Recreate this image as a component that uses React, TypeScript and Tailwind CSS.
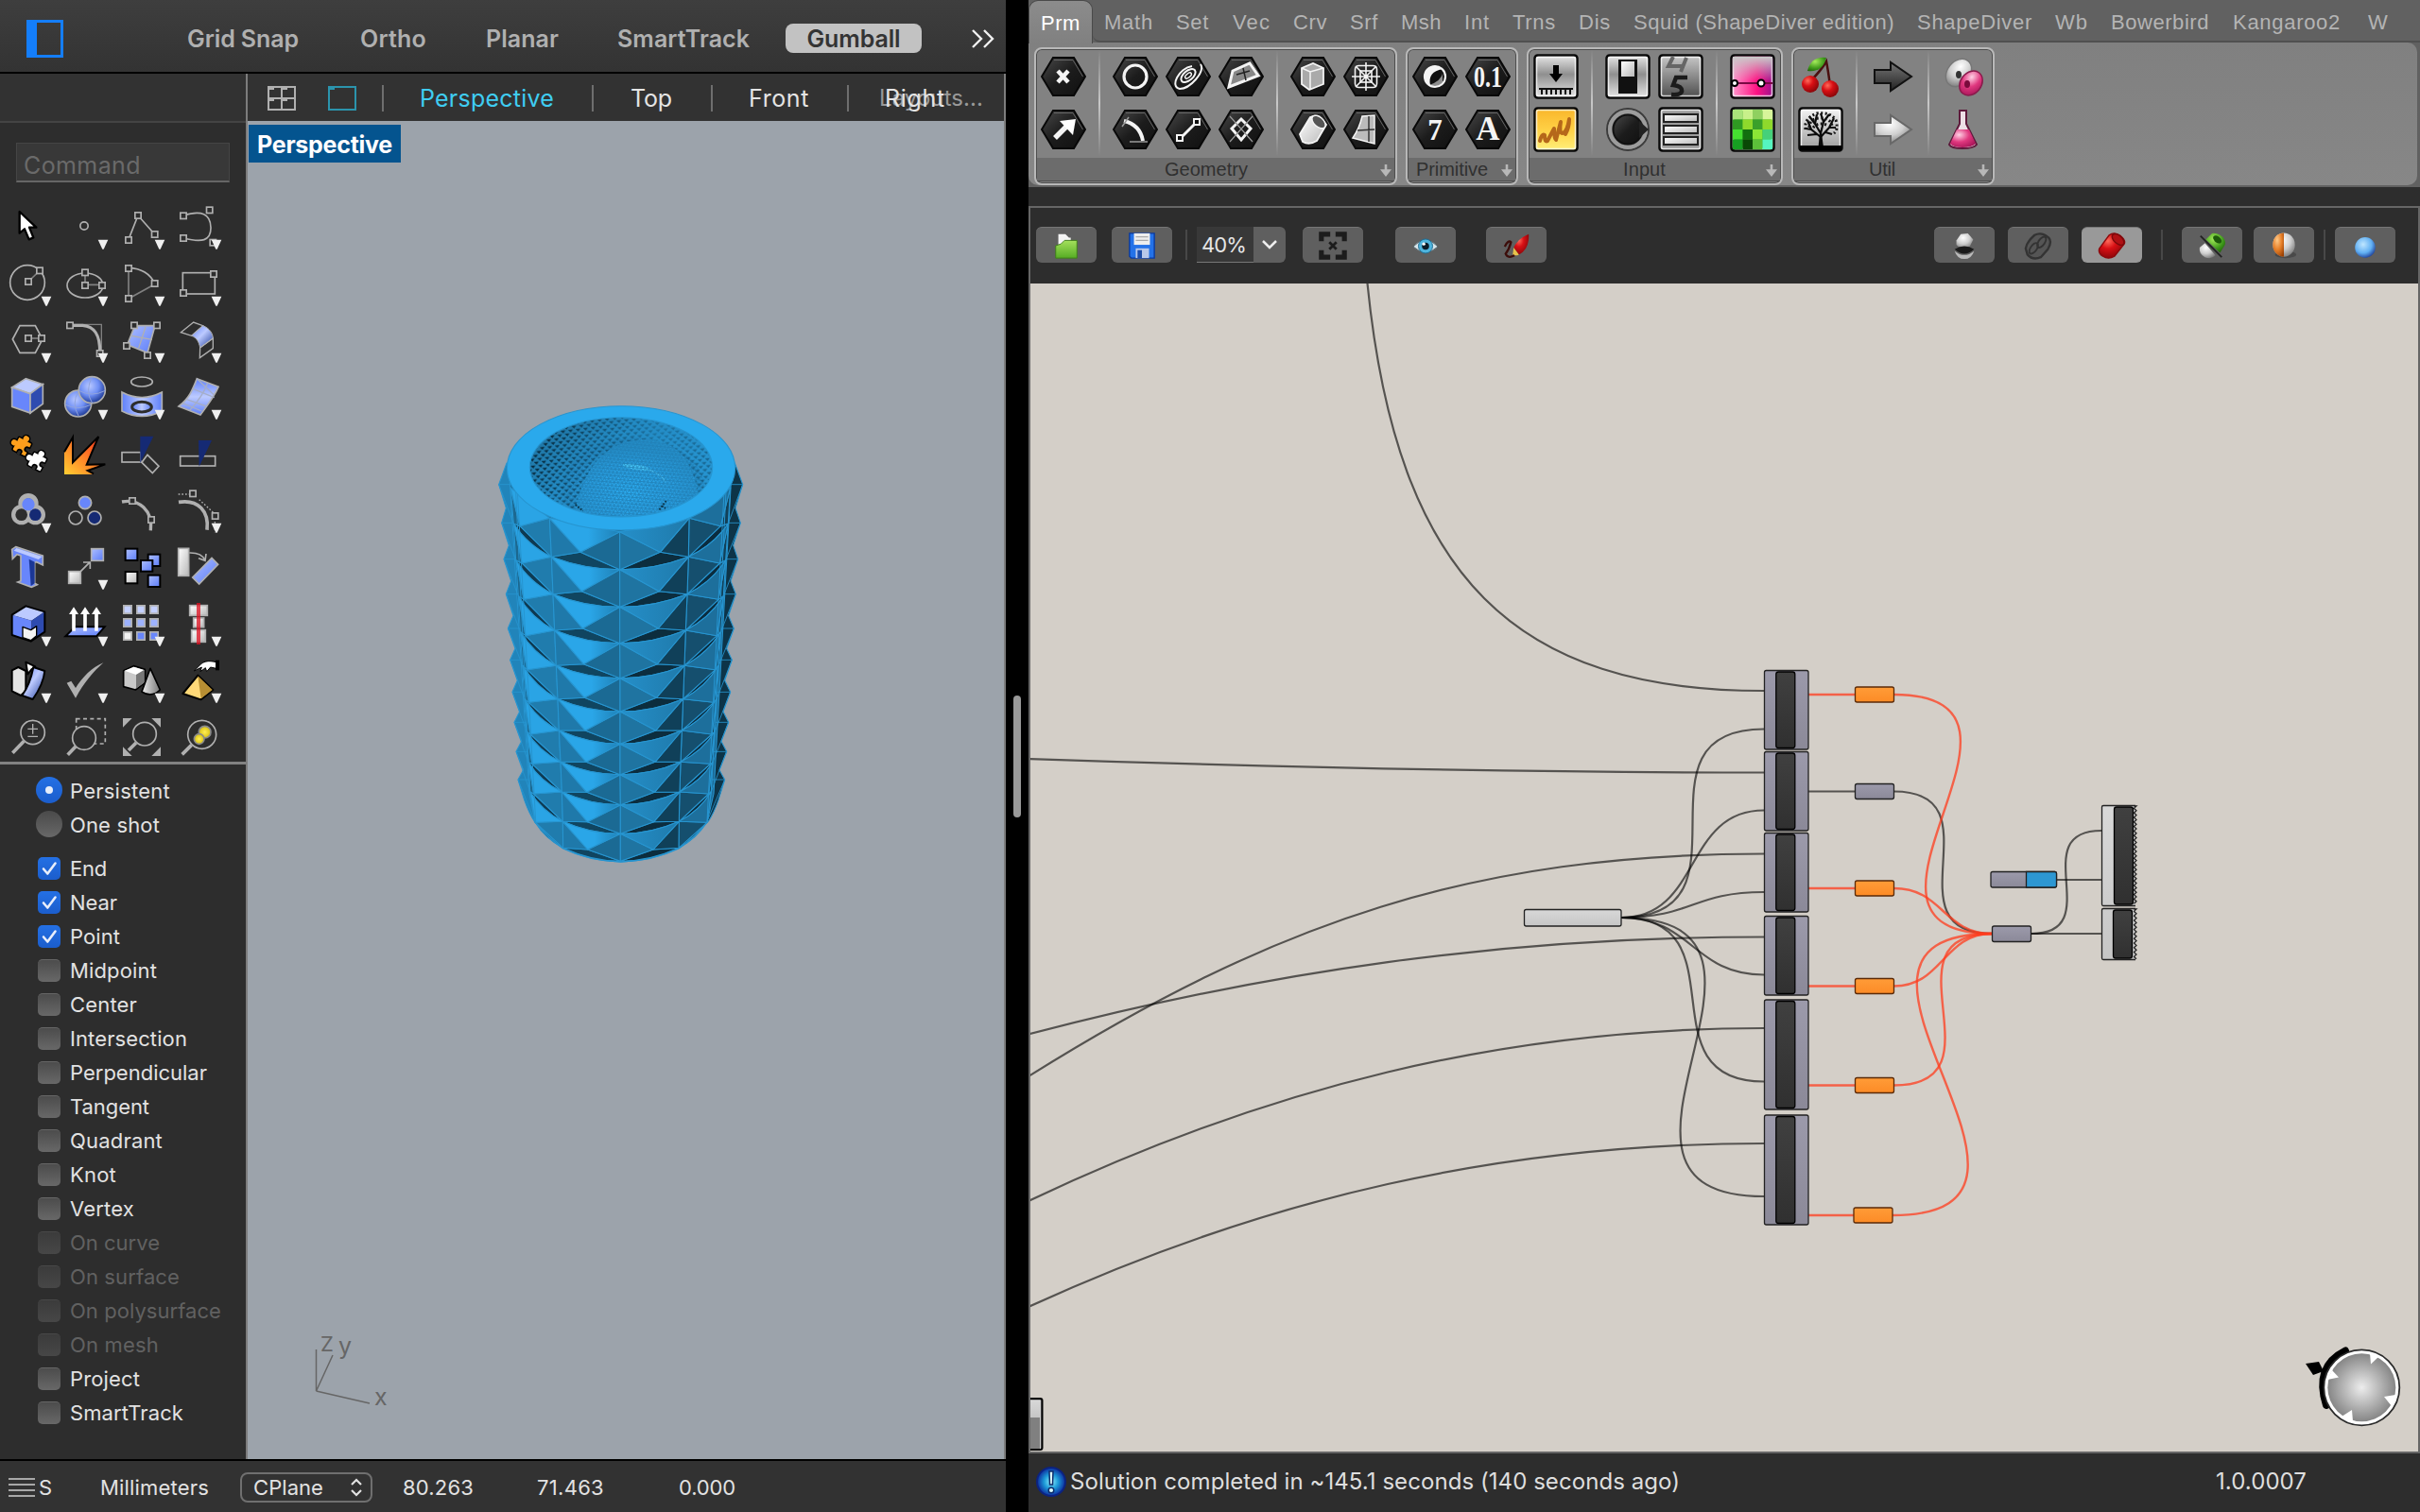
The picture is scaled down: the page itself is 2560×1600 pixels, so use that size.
import { useLayoutEffect, useRef, useState } from 'react'
import type { ReactNode } from 'react'

const INTER = "font-['Inter','Liberation_Sans',sans-serif]"
const ARIAL = "font-['Liberation_Sans',sans-serif]"

/* Single-line label whose tracking is tuned so that it spans `w` pixels. */
function Label({ w, children, className = '' }: { w: number; children: string; className?: string }) {
  const ref = useRef<HTMLSpanElement>(null)
  const [tracking, setTracking] = useState(0)
  useLayoutEffect(() => {
    if (!ref.current) return
    const natural = ref.current.getBoundingClientRect().width - tracking * children.length
    setTracking((w - natural) / children.length)
  }, [w, children])
  return (
    <span ref={ref} className={`inline-block shrink-0 whitespace-pre leading-none ${className}`} style={{ letterSpacing: `${tracking}px` }}>
      {children}
    </span>
  )
}

function Defs() {
  return (
    <svg className="absolute h-0 w-0">
      <defs>
        <linearGradient id="blue" x1="0" y1="0" x2="1" y2="1"><stop offset="0" stopColor="#aebfff" /><stop offset="1" stopColor="#5b7cf8" /></linearGradient>
        <linearGradient id="blueDeep" x1="0" y1="0" x2="1" y2="1"><stop offset="0" stopColor="#6484fb" /><stop offset=".45" stopColor="#bccaff" /><stop offset="1" stopColor="#1d3a98" /></linearGradient>
        <linearGradient id="blueBand" x1="0" y1="0" x2="0" y2="1"><stop offset="0" stopColor="#5f80fa" /><stop offset=".5" stopColor="#bccaff" /><stop offset="1" stopColor="#5f80fa" /></linearGradient>
        <linearGradient id="blueSide" x1="0" y1="0" x2="1" y2="0"><stop offset="0" stopColor="#5f80fa" /><stop offset=".5" stopColor="#bccaff" /><stop offset="1" stopColor="#5f80fa" /></linearGradient>
        <radialGradient id="ball" cx=".4" cy=".35" r=".7"><stop offset="0" stopColor="#b9c8ff" /><stop offset=".5" stopColor="#7090f5" /><stop offset="1" stopColor="#15308a" /></radialGradient>
        <linearGradient id="white" x1="0" y1="0" x2="1" y2="1"><stop offset="0" stopColor="#ffffff" /><stop offset="1" stopColor="#b8b8b8" /></linearGradient>
        <linearGradient id="cone" x1="0" y1="0" x2="1" y2="0"><stop offset="0" stopColor="#eee" /><stop offset="1" stopColor="#777" /></linearGradient>
        <linearGradient id="fire" x1="0" y1="1" x2="1" y2="0"><stop offset="0" stopColor="#ffcf33" /><stop offset="1" stopColor="#ff2a1a" /></linearGradient>
        <radialGradient id="yellow"><stop offset="0" stopColor="#ffee55" /><stop offset="1" stopColor="#d8c010" /></radialGradient>
        <linearGradient id="hex" x1="0" y1="0" x2="1" y2="1"><stop offset="0" stopColor="#4a4a4a" /><stop offset=".5" stopColor="#1c1c1c" /><stop offset="1" stopColor="#101010" /></linearGradient>
        <linearGradient id="plate" x1="0" y1="0" x2="0" y2="1"><stop offset="0" stopColor="#e8e8e8" /><stop offset=".45" stopColor="#8f8f8f" /><stop offset="1" stopColor="#e6e6e6" /></linearGradient>
        <linearGradient id="plateDark" x1="0" y1="0" x2="0" y2="1"><stop offset="0" stopColor="#c9c9c9" /><stop offset="1" stopColor="#4c4c4c" /></linearGradient>
        <linearGradient id="plateSoft" x1="0" y1="0" x2="0" y2="1"><stop offset="0" stopColor="#f4f4f4" /><stop offset="1" stopColor="#9a9a9a" /></linearGradient>
        <linearGradient id="gold" x1="0" y1="0" x2="0" y2="1"><stop offset="0" stopColor="#f9b52a" /><stop offset=".5" stopColor="#ffd045" /><stop offset="1" stopColor="#fff07a" /></linearGradient>
        <linearGradient id="pink" x1="0" y1="0" x2="1" y2="0"><stop offset="0" stopColor="#ff9ccf" /><stop offset=".6" stopColor="#ff1283" /><stop offset="1" stopColor="#95138f" /></linearGradient>
        <linearGradient id="shade" x1="0" y1="0" x2="0" y2="1"><stop offset="0" stopColor="#c9c9c9" /><stop offset="1" stopColor="#c9c9c9" stopOpacity="0" /></linearGradient>
        <radialGradient id="red" cx=".35" cy=".3" r=".8"><stop offset="0" stopColor="#ff6a5a" /><stop offset=".4" stopColor="#d80f14" /><stop offset="1" stopColor="#7a0508" /></radialGradient>
        <radialGradient id="rose" cx=".35" cy=".3" r=".8"><stop offset="0" stopColor="#ffd0e4" /><stop offset=".5" stopColor="#e0387f" /><stop offset="1" stopColor="#a51457" /></radialGradient>
        <radialGradient id="silver" cx=".4" cy=".3" r=".8"><stop offset="0" stopColor="#ffffff" /><stop offset=".5" stopColor="#cfcfcf" /><stop offset="1" stopColor="#6d6d6d" /></radialGradient>
        <radialGradient id="green" cx=".4" cy=".3" r=".8"><stop offset="0" stopColor="#a5ec5b" /><stop offset=".6" stopColor="#419b1c" /><stop offset="1" stopColor="#1c5a08" /></radialGradient>
        <radialGradient id="orange" cx=".4" cy=".3" r=".8"><stop offset="0" stopColor="#ffc987" /><stop offset=".5" stopColor="#e8812a" /><stop offset="1" stopColor="#9b4103" /></radialGradient>
        <radialGradient id="sky" cx=".4" cy=".35" r=".7"><stop offset="0" stopColor="#bfe6ff" /><stop offset=".6" stopColor="#62b0f3" /><stop offset="1" stopColor="#1c3e98" /></radialGradient>
        <radialGradient id="info"><stop offset="0" stopColor="#8ff0ff" /><stop offset=".5" stopColor="#1c9ad8" /><stop offset="1" stopColor="#0d2a9c" /></radialGradient>
        <linearGradient id="lime" x1="0" y1="0" x2="0" y2="1"><stop offset="0" stopColor="#a4e05c" /><stop offset="1" stopColor="#56ad24" /></linearGradient>
        <linearGradient id="arrowDark" x1="0" y1="0" x2="0" y2="1"><stop offset="0" stopColor="#777" /><stop offset="1" stopColor="#222" /></linearGradient>
      </defs>
    </svg>
  )
}

/* ---------- Modelling tool palette ---------- */

const G = '#b0b0b0'
const BG = '#2d2d2d'

function Handle({ x, y }: { x: number; y: number }) {
  return <rect x={x - 9.5} y={y - 9.5} width="19" height="19" fill={BG} stroke={G} strokeWidth="5" />
}

/* Jigsaw piece: a square with two knobs and two notches. */
function Piece({ x, y, fill }: { x: number; y: number; fill: string }) {
  const body = <><rect x="-22" y="-22" width="44" height="44" rx="3" /><circle cx="0" cy="-28" r="9.500" /><circle cx="-28" cy="0" r="9.500" /></>
  return (
    <g transform={`translate(${x} ${y}) rotate(28)`}>
      <g fill="#000" stroke="#000" strokeWidth="9">{body}</g>
      <g fill={fill} stroke="none">{body}</g>
      <circle cx="0" cy="18" r="7" fill={BG} stroke="#000" strokeWidth="5" />
      <circle cx="18" cy="0" r="7" fill={BG} stroke="#000" strokeWidth="5" />
      <path d="M-5 24H5M24 -5V5" stroke={BG} strokeWidth="7" />
    </g>
  )
}

/* Each drawing lives in its own 180-unit cell of the palette's drawing space. */
const TOOLS: ReactNode[][] = [
  [
    <path d="M62 72V140L78 127L92 160L106 154L93 122L115 122Z" fill="#fff" stroke="#000" strokeWidth="7" strokeLinejoin="round" />,
    <circle cx="267" cy="117" r="12.5" />,
    <><path d="M408 160L438 84L491 144" /><Handle x={408} y={162} /><Handle x={438} y={84} /><Handle x={491} y={144} /></>,
    <><path d="M582 84C640 66 668 80 669 122C670 166 640 170 582 156" /><Handle x={582} y={85} /><Handle x={665} y={67} /><Handle x={582} y={156} /><Handle x={676} y={170} /></>,
  ],
  [
    <><circle cx="87" cy="297" r="55" /><path d="M90 294L126 259" stroke="#808080" /><Handle x={90} y={294} /><Handle x={126} y={259} /></>,
    <><ellipse cx="270" cy="306" rx="57" ry="39" /><path d="M270 268V304H320" stroke="#808080" /><Handle x={270} y={265} /><Handle x={270} y={306} /><Handle x={324} y={306} /></>,
    <><path d="M408 252V348L491 302" stroke="#808080" /><path d="M408 250C450 252 478 272 491 300" /><Handle x={408} y={252} /><Handle x={408} y={348} /><Handle x={491} y={300} /></>,
    <><rect x="580" y="266" width="102" height="67" /><Handle x={678} y={270} /><Handle x={582} y={330} /></>,
  ],
  [
    <><path d="M40 477L63 434H112L135 477L112 520H63Z" /><path d="M90 474H130" stroke="#808080" /><Handle x={90} y={474} /><Handle x={132} y={474} /></>,
    <><path d="M222 430H322V520" stroke="#808080" strokeWidth="4" /><path d="M222 433H262C300 436 318 462 317 520" strokeWidth="10" /><Handle x={222} y={433} /><Handle x={317} y={522} /></>,
    <><path d="M428 434H492L468 520L404 494Z" fill="url(#blue)" /><path d="M462 438L440 505M418 466L482 478" strokeWidth="4" /><Handle x={426} y={433} /><Handle x={498} y={433} /><Handle x={402} y={498} /><Handle x={468} y={528} /></>,
    <><path d="M574 455L614 423L644 434L608 466Z" strokeWidth="4" /><path d="M644 434C665 442 675 458 676 474L635 504C632 486 624 472 608 466Z" fill="url(#blueDeep)" strokeWidth="3" /><path d="M676 474V506L634 536L635 504Z" strokeWidth="4" /></>,
  ],
  [
    <><path d="M38 630L82 602L136 620L96 650Z" fill="#bccaff" /><path d="M38 630L96 650V711L38 691Z" fill="#6886fb" /><path d="M96 650L136 620V682L96 711Z" fill="#2e4bb0" /></>,
    <><circle cx="248" cy="681" r="42" fill="url(#ball)" /><path d="M206 684Q248 705 290 684M250 640Q225 680 250 722" stroke="#91a4dd" strokeWidth="3" /><circle cx="292" cy="638" r="42" fill="url(#ball)" /><path d="M250 640Q292 662 334 640M293 596Q268 640 293 680" stroke="#91a4dd" strokeWidth="3" /></>,
    <><ellipse cx="450" cy="612" rx="34" ry="15" /><path d="M387 645Q450 678 514 645V705Q450 738 387 705Z" fill="url(#blueSide)" /><ellipse cx="450" cy="692" rx="31" ry="16" fill="url(#blueSide)" stroke={BG} strokeWidth="9" /></>,
    <><path d="M625 602L693 628C680 660 655 690 636 717L567 690C600 665 610 640 625 602Z" fill="url(#blueBand)" /><path d="M659 616C648 646 622 682 602 703M612 634L680 662M592 668L656 690M625 602L680 655M580 680L640 705" stroke="#a5aec9" strokeWidth="4" /></>,
  ],
  [
    <><Piece x={70} y={818} fill="#ff9f1c" /><Piece x={118} y={866} fill="#fff" /></>,
    <><path d="M204 906V835L231 788V868L313 786L275 875L334 874L278 894L297 906Z" fill="url(#fire)" stroke="none" /><path d="M204 835L231 788V868L313 786L275 875L334 874L278 894L297 904" stroke="#000" strokeWidth="6" /></>,
    <><rect x="387" y="836" width="60" height="31" /><path d="M450 868L468 844L504 880L484 902Z" /><path d="M445 785H487L445 870Z" fill="#152a74" stroke="none" /></>,
    <><rect x="572" y="848" width="111" height="31" /><path d="M630 798H672L632 881Z" fill="#152a74" stroke="none" /></>,
  ],
  [
    <><g strokeWidth="16" stroke={G}><circle cx="68" cy="134" r="24" /><circle cx="112" cy="134" r="24" /><circle cx="90" cy="98" r="24" /></g><g stroke="none"><circle cx="112" cy="134" r="19" fill="#152a74" /><circle cx="68" cy="134" r="19" fill={BG} /><circle cx="90" cy="101" r="20" fill="#6886fb" /></g></>,
    <><circle cx="270" cy="96" r="20" fill="#6886fb" /><circle cx="240" cy="144" r="21" /><circle cx="300" cy="144" r="21" fill="#152a74" /></>,
    <><path d="M387 93C440 82 486 120 478 184" strokeWidth="10" /><Handle x={420} y={90} /><Handle x={480} y={150} /></>,
    <><path d="M567 94C630 84 664 124 657 182" strokeWidth="11" /><path d="M566 69H600M632 86L676 126M682 156V190" strokeWidth="4" strokeDasharray="5 6" /><Handle x={612} y={67} /><Handle x={683} y={138} /></>,
  ],
  [
    <><path d="M50 236L136 264V294L116 284L110 286V352L118 356L100 364L56 348L66 344V264L54 260L40 274L38 244Z" fill="#6886fb" /><path d="M92 275L110 284V352L98 360Z" fill="#1b3796" stroke="none" /><path d="M52 240L134 267L122 276L44 248Z" fill="#bccaff" stroke="none" /></>,
    <><rect x="218" y="314" width="38" height="38" fill="url(#white)" /><rect x="290" y="242" width="38" height="38" fill="url(#blue)" /><path d="M256 314L286 284M264 285H286V306" /></>,
    <g stroke="#000" strokeWidth="6"><rect x="398" y="242" width="38" height="37" fill="url(#blue)" /><rect x="470" y="260" width="38" height="37" fill="url(#blue)" /><rect x="447" y="279" width="37" height="35" fill="url(#blue)" /><rect x="398" y="315" width="38" height="37" fill="url(#white)" /><rect x="470" y="326" width="38" height="37" fill="url(#blue)" /></g>,
    <><rect x="566" y="241" width="33" height="87" fill="url(#white)" /><path d="M601 255Q640 254 650 278M630 272L651 280L654 258" /><path d="M611 333L672 271L692 292L632 354Z" fill="url(#blue)" /></>,
  ],
  [
    <g stroke="#000" strokeLinejoin="round"><path d="M38 452L82 424L142 442L100 470Z" fill="#bccaff" stroke="none" /><path d="M38 452L100 470V536L38 516Z" fill="#6886fb" stroke="none" /><path d="M100 470L142 442V506L100 536Z" fill="#2e4bb0" stroke="none" /><path d="M38 452L82 424L142 442V506L98 536L38 516Z" strokeWidth="6" /><path d="M72 490L98 500L116 488V518L98 533L72 524Z" fill="#f3f3f3" strokeWidth="4" /></g>,
    <><path d="M238 490H332L306 520H208Z" fill="url(#blue)" stroke="#000" strokeWidth="6" /><path d="M234 503V446M270 503V446M306 503V446" stroke="#fff" strokeWidth="11" /><path d="M219 450L234 427L249 450ZM255 450L270 427L285 450ZM291 450L306 427L321 450Z" fill="#fff" stroke="none" /></>,
    <g strokeWidth="5">{[0, 1, 2].map((r) => [0, 1, 2].map((c) => <rect key={`${r}${c}`} x={392.5 + c * 42} y={422.5 + r * 42} width="25" height="25" fill={r === 2 && c === 0 ? '#f2f2f2' : ['#c4d0ff', '#9db2ff', '#6886fb'][r]} />))}</g>,
    <><rect x="602" y="422" width="56" height="32" fill="url(#white)" /><rect x="614" y="462" width="33" height="29" fill="url(#white)" /><rect x="608" y="500" width="44" height="38" fill="url(#white)" /><path d="M630 414V546" stroke="#e01020" strokeOpacity=".75" strokeWidth="12" /></>,
  ],
  [
    <g stroke="#000" strokeWidth="6" strokeLinejoin="round"><path d="M38 628L58 618L82 630V694L66 708L38 694Z" fill="#e4e4e4" /><path d="M82 602L112 616L100 625L88 640Z" fill="#fff" /><path d="M106 618L142 630C138 670 118 700 104 720L70 708C90 680 100 650 106 618Z" fill="url(#blueDeep)" /></g>,
    <path d="M212 668L226 662L240 684C262 650 290 620 328 604C296 632 266 668 240 716Z" fill={G} stroke="none" />,
    <g strokeLinejoin="round"><path d="M392 629L424 614L460 625V668L430 690L392 680Z" fill="#c9c9c9" stroke="#000" strokeWidth="5" /><path d="M395 629L425 617L457 627L432 642Z" fill="#fff" stroke="none" /><path d="M432 642L457 627V667L432 686Z" fill="#777" stroke="none" /><path d="M477 622L508 690Q480 716 450 696Z" fill="url(#cone)" stroke="#000" strokeWidth="5" /></g>,
    <g strokeLinejoin="round"><path d="M628 644L676 690L638 721L580 702Z" fill="#ffd978" stroke="#000" strokeWidth="6" /><path d="M628 646L674 690L638 718Z" fill="#b88f33" stroke="none" /><path d="M686 602C660 596 650 600 640 606L616 630L640 618L636 632L652 620L656 632L668 618L686 622Z" fill="#fff" stroke="#000" strokeWidth="3" /><path d="M684 596H696V628H684Z" fill="#000" stroke="none" /></g>,
  ],
  [
    <><circle cx="104" cy="825" r="38" /><path d="M76 853L40 890" strokeWidth="11" /><path d="M88 814H120M104 798V830M88 838H120" strokeWidth="4" /></>,
    <><path d="M242 782H334V861H242Z" strokeDasharray="12 10" /><circle cx="267" cy="843" r="37" fill={BG} /><path d="M240 870L215 896" strokeWidth="11" /></>,
    <><circle cx="459" cy="830" r="37" /><path d="M432 858L408 882" strokeWidth="11" /><path d="M390 780H419L390 809ZM510 780H481L510 809ZM390 900H419L390 871ZM510 900H481L510 871Z" fill={G} stroke="none" /></>,
    <><circle cx="641" cy="832" r="45" /><path d="M608 865L578 895" strokeWidth="11" /><circle cx="650" cy="824" r="19" fill="url(#yellow)" stroke="#8a8a8a" /><circle cx="632" cy="846" r="16" fill="url(#yellow)" stroke="#8a8a8a" /></>,
  ],
]

const NO_MENU = new Set(['0-0', '4-0', '4-1', '4-2', '4-3', '5-1', '5-2', '6-0', '6-2', '6-3', '9-0', '9-1', '9-2', '9-3'])

function ToolPalette() {
  return (
    <div className="grid grid-cols-4 auto-rows-[60px] w-[240px]">
      {TOOLS.map((row, r) =>
        row.map((icon, c) => {
          const top = 54 + 180 * (r % 5)
          return (
            <svg key={`${r}-${c}`} className="size-[60px] overflow-visible" viewBox={`${180 * c} ${top} 180 180`} fill="none" stroke={G} strokeWidth="5">
              {icon}
              {!NO_MENU.has(`${r}-${c}`) && <path transform={`translate(${180 * c} ${top})`} d="M131 107H163L149 137H145Z" fill="#f0f0f0" stroke="none" />}
            </svg>
          )
        }),
      )}
    </div>
  )
}

/* ---------- Object snaps ---------- */

type Snap = [string, number, 'on' | 'off' | 'disabled']
const SNAPS: Snap[] = [
  ['End', 39, 'on'], ['Near', 50, 'on'], ['Point', 53, 'on'], ['Midpoint', 92, 'off'], ['Center', 71, 'off'],
  ['Intersection', 124, 'off'], ['Perpendicular', 145, 'off'], ['Tangent', 84, 'off'], ['Quadrant', 98, 'off'],
  ['Knot', 49, 'off'], ['Vertex', 68, 'off'], ['On curve', 95, 'disabled'], ['On surface', 116, 'disabled'],
  ['On polysurface', 160, 'disabled'], ['On mesh', 94, 'disabled'], ['Project', 74, 'off'], ['SmartTrack', 120, 'off'],
]

function SnapList() {
  return (
    <div className={`${INTER} text-[22px] text-[#e2e2e2]`}>
      <div className="flex h-9 items-center pl-[38px]">
        <span className="mr-2 flex size-7 items-center justify-center rounded-full bg-gradient-to-b from-[#2470e4] to-[#1b5dcc]"><span className="size-2 rounded-full bg-[#e6edfa]" /></span>
        <Label w={106} className="mt-0.5">Persistent</Label>
      </div>
      <div className="flex h-9 items-center pl-[38px]">
        <span className="mr-2 size-7 rounded-full bg-gradient-to-b from-[#4a4a4a] to-[#686868]" />
        <Label w={95} className="mt-0.5">One shot</Label>
      </div>
      <div className="mt-[11px]">
        {SNAPS.map(([name, w, state]) => (
          <div key={name} className={state === 'disabled' ? 'flex h-9 items-center pl-10 text-[#616161]' : 'flex h-9 items-center pl-10'}>
            {state === 'on' ? (
              <span className="mr-2.5 flex size-6 items-center justify-center rounded-[5px] bg-gradient-to-b from-[#2470e4] to-[#1b5dcc]">
                <svg className="size-6" viewBox="0 0 24 24" fill="none" stroke="#e8eefb" strokeWidth="2.6" strokeLinecap="round" strokeLinejoin="round"><path d="M6 12.5L10.3 17.5L18.5 6.5" /></svg>
              </span>
            ) : (
              <span className={state === 'off' ? 'mr-2.5 size-6 rounded-[5px] border-t border-[#666] bg-gradient-to-b from-[#4c4c4c] to-[#686868]' : 'mr-2.5 size-6 rounded-[5px] border-t border-[#484848] bg-gradient-to-b from-[#3b3b3b] to-[#474747]'} />
            )}
            <Label w={w}>{name}</Label>
          </div>
        ))}
      </div>
    </div>
  )
}

/* ---------- Shaded vase in the viewport ---------- */

const AX = [437, 437, 437, 437, 438, 438, 438, 438, 439, 439, 439]
const AY = [458, 578, 697, 812, 923, 1029, 1132, 1229, 1325, 1417, 1504]
const BX = [214, 220, 225, 230, 235, 240, 244, 249, 253, 256, 257]
const BY = [415, 538, 656, 771, 883, 989, 1089, 1189, 1284, 1378, 1462]
const CX = [657, 655, 651, 646, 642, 638, 634, 630, 627, 625, 624]
const PX = [312, 316, 319, 322, 325, 327, 330, 332, 334, 335]
const RX = [565, 562, 559, 556, 553, 551, 549, 547, 545, 543]
const PY = [523, 647, 765, 878, 985, 1089, 1189, 1285, 1379, 1467]
const DX = [90, 100, 107, 115, 121, 128, 134, 141, 147, 152, 168]
const EX = [788, 781, 773, 766, 758, 751, 745, 739, 732, 727, 713]
const DY = [318, 432, 548, 662, 775, 882, 988, 1092, 1190, 1283, 1380]
const QX = [120, 127, 133, 138, 143, 148, 153, 159, 164, 169]
const SX = [757, 754, 750, 745, 740, 735, 729, 724, 719, 714]
const QY = [440, 558, 673, 788, 896, 1000, 1101, 1195, 1290, 1381]
const LX = [53, 62, 69, 76, 82, 89, 96, 102, 108, 114]
const ZX = [827, 820, 812, 805, 799, 793, 788, 782, 776, 770]
const SY = [308, 430, 545, 656, 765, 865, 967, 1063, 1156, 1245]

function silhouette(outer: number[], dir: number) {
  let d = `M${outer[0] + dir * 25} 240`
  outer.forEach((x, i) => {
    d += `L${x} ${SY[i]}`
    if (i < 9) d += `L${x + dir * 23} ${(SY[i] + SY[i + 1]) / 2 + 14}`
  })
  return `${d}L${outer[9] + dir * 20} 1310Q${outer[9] + dir * 34} 1350 ${outer[9] + dir * 52} 1378L440 1400V240Z`
}

function band(x0: number[], y0: number[], ax: number[], ay: number[], x1: number[], y1: number[], c: string[], key: string) {
  /* The outer bands are seen almost edge-on, so their rim arcs hug the lower end. */
  const side = key === 'l' || key === 'r'
  const arc = (k: number) => {
    if (!side) return `Q${(x0[k] + x1[k]) / 2} ${(y0[k] + y1[k]) / 2 + 21} ${x1[k]} ${y1[k]}`
    return `Q${x0[k] + (x1[k] - x0[k]) * 0.36} ${y0[k] + (y1[k] - y0[k]) * 0.64} ${x1[k]} ${y1[k]}`
  }
  return ay.map((_, k) => {
    const apex = `L${ax[k]} ${ay[k]}`
    const top = k === 0 ? `M${x0[0]} ${y0[0]}L${x1[0]} ${y1[0]}` : `M${x0[k]} ${y0[k]}${arc(k)}`
    return (
      <g key={key + k}>
        <path d={`M${x0[k + 1]} ${y0[k + 1]}${arc(k + 1)}${apex}Z`} fill={c[3]} />
        <path d={`M${x0[k]} ${y0[k]}${apex}L${x0[k + 1]} ${y0[k + 1]}Z`} fill={c[1]} />
        <path d={`M${x1[k]} ${y1[k]}${apex}L${x1[k + 1]} ${y1[k + 1]}Z`} fill={c[2]} />
        <path d={`${top}${apex}Z`} fill={c[0]} />
      </g>
    )
  })
}

function Vase() {
  return (
    <svg className="absolute left-[248px] top-[282px] h-[520px] w-[300px]" viewBox="0 0 900 1560" stroke="#2795d0" strokeWidth="3.2" strokeLinejoin="round">
      <defs>
        <linearGradient id="bowl" x1="0" y1="0.2" x2="1" y2="0.8"><stop offset="0" stopColor="#1f74a2" /><stop offset=".35" stopColor="#238bc4" /><stop offset="1" stopColor="#2796d3" /></linearGradient>
        <radialGradient id="bowlGlow" cx=".5" cy=".5" r=".5"><stop offset="0" stopColor="#2cb2f8" /><stop offset=".6" stopColor="#2aa5ea" stopOpacity=".7" /><stop offset="1" stopColor="#2aa5ea" stopOpacity="0" /></radialGradient>
        <linearGradient id="faceR" x1="0" y1="0" x2="1" y2="0"><stop offset="0" stopColor="#258fc9" /><stop offset="1" stopColor="#1f7aab" /></linearGradient>
        <linearGradient id="faceL" x1="0" y1="0" x2="1" y2="0"><stop offset="0" stopColor="#2aa6e8" /><stop offset=".55" stopColor="#2aa6e8" /><stop offset="1" stopColor="#1f80b5" /></linearGradient>
        <linearGradient id="fade" x1="0" y1="0.3" x2="1" y2="0.5"><stop offset="0" stopColor="#fff" /><stop offset=".3" stopColor="#8c8c8c" /><stop offset=".65" stopColor="#3c3c3c" /><stop offset="1" stopColor="#666" /></linearGradient>
        <mask id="shadeMask"><rect x="140" y="80" width="600" height="340" fill="url(#fade)" stroke="none" /></mask>
        <pattern id="mesh" width="24" height="22" patternUnits="userSpaceOnUse" patternTransform="rotate(-7)"><path d="M2 2H18L10 11ZM14 13H30L22 22ZM-10 13H6L-2 22Z" fill="#03202f" stroke="none" /></pattern>
        <pattern id="meshLit" width="25" height="21" patternUnits="userSpaceOnUse" patternTransform="rotate(5)"><path d="M0 1H25M0 11.5H25M0 1L12.5 21M12.5 1L25 21M12.5 1L0 21M25 1L12.5 21" stroke="#2080b7" strokeWidth="2.6" fill="none" /></pattern>
      </defs>
      <path d={silhouette(LX, 1)} fill="#2184ba" />
      <path d={silhouette(ZX, -1)} fill="#0d3448" />
      <path d="M88 300L150 1290L168 1380Q210 1430 257 1462Q340 1504 440 1506Q540 1504 624 1462Q680 1425 714 1380L735 1290L790 300Z" fill="#1c6a95" />
      {LX.map((x, i) => <path key={x} d={`M${x} ${SY[i]}L${DX[i]} ${SY[i]}M${x} ${SY[i]}L${DX[i + 1]} ${DY[i + 1]}`} fill="none" strokeWidth="2.5" />)}
      {ZX.map((x, i) => <path key={x} d={`M${x} ${SY[i]}L${EX[i]} ${SY[i]}M${x} ${SY[i]}L${EX[i + 1]} ${DY[i + 1]}`} fill="none" strokeWidth="2.5" />)}
      {band(DX, DY, QX, QY, BX, BY, ['#2aa4e5', '#1c6890', '#207cad', '#0e3a52'], 'l')}
      {band(EX, DY, SX, QY, CX, BY, ['#1d6f9c', '#124058', '#154f6e', '#0b2c3e'], 'r')}
      {band(BX, BY, PX, PY, AX, AY, ['url(#faceL)', '#1f79aa', '#1b6a94', '#104560'], 'cl')}
      {band(AX, AY, RX, PY, CX, BY, ['url(#faceR)', '#1f74a1', '#104059', '#0c2d3e'], 'cr')}
      <path d="M168 1380Q210 1430 257 1464Q340 1504 440 1506Q540 1504 624 1464Q680 1425 714 1380" fill="none" strokeWidth="4" />
      <path d="M107 330L152 1283M112 330L170 1378M774 330L727 1283M768 330L714 1378" fill="none" strokeWidth="3" />
      <ellipse cx="441" cy="256" rx="362" ry="197" fill="#2aa9ec" />
      <ellipse cx="441" cy="253" rx="290" ry="158" fill="url(#bowl)" />
      <clipPath id="bowlClip"><ellipse cx="441" cy="253" rx="288" ry="156" /></clipPath>
      <g clipPath="url(#bowlClip)" stroke="none">
        <ellipse cx="470" cy="330" rx="220" ry="140" fill="url(#bowlGlow)" />
        <path d="M445 244Q500 236 540 262Q500 268 455 254Z" fill="#4fd2ff" opacity=".8" />
        <path d="M530 262Q570 275 582 300" stroke="#4fc4f5" strokeWidth="4" fill="none" />
        <ellipse cx="480" cy="320" rx="225" ry="160" fill="url(#meshLit)" />
        <path d="M140 80H740V420H690Q690 170 520 165Q330 165 290 420H140Z" fill="url(#mesh)" mask="url(#shadeMask)" />
        <path d="M296 372L320 392M562 388L584 360M570 376L582 384" stroke="#0c3a52" strokeWidth="6" strokeDasharray="6 4" />
      </g>
    </svg>
  )
}

/* ---------- Modeller window ---------- */

function ModellerWindow() {
  return (
    <div className="flex h-[1600px] w-[1064px] shrink-0 flex-col bg-[#2d2d2d]">
      <div className={`${INTER} flex h-[78px] shrink-0 items-center border-b-2 border-black bg-gradient-to-b from-[#3e3e3e] to-[#333] pt-[5px] text-[25px] font-semibold text-[#b0b0b0]`}>
        <span className="ml-7 flex h-10 w-[39px] border-[3px] border-[#147efb]"><span className="w-2 bg-[#147efb]" /></span>
        <Label w={118} className="ml-[131px] mt-0.5">Grid Snap</Label>
        <Label w={70} className="ml-[65px] mt-0.5">Ortho</Label>
        <Label w={77} className="ml-[63px] mt-0.5">Planar</Label>
        <Label w={140} className="ml-[62px] mt-0.5">SmartTrack</Label>
        <div className="ml-[38px] flex h-[31px] w-36 items-center justify-center rounded-lg bg-[#c2c2c2] text-[#343434]"><Label w={99} className="mt-0.5">Gumball</Label></div>
        <svg className="ml-[52px] h-[22px] w-[26px]" viewBox="0 0 26 22" fill="none" stroke="#f0f0f0" strokeWidth="2.4"><path d="M2 2L11 11L2 20M14 2L23 11L14 20" /></svg>
      </div>
      <div className="flex h-[1466px] shrink-0">
        <div className="flex w-[260px] shrink-0 flex-col">
          <div className="h-[52px] shrink-0 border-b-2 border-[#444] bg-[#323232]" />
          <div className="mt-[21px] ml-[17px] flex h-[42px] w-[226px] shrink-0 items-center border border-b-2 border-[#454545] border-b-[#666] bg-[#383838] pl-[7px] pt-[7px]">
            <Label w={124} className={`${INTER} text-[25px] text-[#6a6a6a]`}>Command</Label>
          </div>
          <div className="mt-[25px]"><ToolPalette /></div>
          <div className="-mt-3 mb-[9px] h-[3px] shrink-0 bg-[#828282]" />
          <SnapList />
        </div>
        <div className="flex w-[804px] flex-col border-x-2 border-[#7d7d7d]">
          <div className={`${INTER} flex h-[50px] shrink-0 items-center bg-[#323232] pt-0.5 text-[25px] text-[#e4e4e4]`}>
            <svg className="ml-[21px] h-[26px] w-[30px] shrink-0" viewBox="0 0 30 26" fill="none" stroke="#b0b0b0" strokeWidth="2"><rect x="1" y="1" width="28" height="24" /><path d="M1 13H29M15 1V25M2 3H7M16 3H21M2 15H7M16 15H21" /></svg>
            <svg className="ml-[34px] h-[26px] w-[30px] shrink-0" viewBox="0 0 30 26" fill="none" stroke="#2b94ad" strokeWidth="2"><rect x="1" y="1" width="28" height="24" /><path d="M2 3H7" /></svg>
            <span className="ml-[27px] h-7 w-0.5 shrink-0 bg-[#6e6e6e]" />
            <Label w={142} className="ml-[38px] text-[#3fcdf2]">Perspective</Label>
            <span className="ml-[40px] h-7 w-0.5 shrink-0 bg-[#6e6e6e]" />
            <Label w={44} className="ml-[39px]">Top</Label>
            <span className="ml-[41px] h-7 w-0.5 shrink-0 bg-[#6e6e6e]" />
            <Label w={64} className="ml-[38px]">Front</Label>
            <span className="ml-[40px] h-7 w-0.5 shrink-0 bg-[#6e6e6e]" />
            <div className="relative ml-[32px] flex items-center">
              <Label w={110} className="text-[24px] text-[#999]">Layouts...</Label>
              <Label w={64} className="absolute left-[6px] top-0">Right</Label>
            </div>
          </div>
          <div className="relative h-[1416px] bg-[#9ca3ab]">
            <div className="absolute left-[1px] top-[4px] flex h-10 w-[161px] items-center bg-[#04548f] pl-[9px] pt-0.5">
              <Label w={143} className={`${INTER} text-[25px] font-bold text-white`}>Perspective</Label>
            </div>
            <Vase />
            <svg className={`${INTER} absolute left-[58px] top-[1272px] h-[100px] w-[110px]`} viewBox="320 1400 110 100" stroke="#666" strokeWidth="1.5" fontSize="25">
              <path d="M334.500 1428V1472L352 1434M334.500 1472L391 1485" fill="none" />
              <g fill="#666" stroke="none"><text x="339" y="1430" fontSize="22">Z</text><text x="358" y="1433">y</text><text x="396" y="1487">x</text></g>
            </svg>
          </div>
        </div>
      </div>
      <div className={`${INTER} flex h-14 items-center border-t-2 border-black bg-[#323232] pt-px text-[22px] text-[#e2e2e2]`}>
        <svg className="ml-[9px] h-5 w-7 shrink-0" viewBox="0 0 28 20" stroke="#a8a8a8" strokeWidth="2"><path d="M0 1H28M0 7H28M0 13H28M0 19H28" /></svg>
        <Label w={14} className="ml-[4px]">S</Label>
        <Label w={115} className="ml-[51px]">Millimeters</Label>
        <div className="ml-[33px] flex h-8 w-[140px] shrink-0 items-center rounded-lg border-2 border-[#6f6f6f] pl-3">
          <Label w={74}>CPlane</Label>
          <svg className="ml-[28px] h-5 w-3.5" viewBox="0 0 14 20" fill="none" stroke="#e2e2e2" strokeWidth="2.2"><path d="M2 7L7 2L12 7M2 13L7 18L12 13" /></svg>
        </div>
        <Label w={75} className="ml-[32px]">80.263</Label>
        <Label w={71} className="ml-[67px]">71.463</Label>
        <Label w={60} className="ml-[79px]">0.000</Label>
      </div>
    </div>
  )
}

/* ---------- Component ribbon ---------- */

function Hex({ children }: { children: ReactNode }) {
  return (
    <svg className="h-[42px] w-12" viewBox="0 0 48 42">
      <path d="M13 1H35L47 21L35 41H13L1 21Z" fill="url(#hex)" stroke="#080808" strokeWidth="2" />
      <path d="M14 3.500H34L44.500 21" fill="none" stroke="#666" strokeWidth="1" />
      <g fill="none" stroke="#f4f4f4" strokeWidth="2.6">{children}</g>
    </svg>
  )
}

function Plate({ fill = 'url(#plate)', children }: { fill?: string; children: ReactNode }) {
  return (
    <svg className="size-12" viewBox="0 0 48 48">
      <rect x="1.500" y="1.500" width="45" height="45" rx="3" fill={fill} stroke="#0a0a0a" strokeWidth="2.500" />
      <rect x="3.500" y="3.500" width="41" height="41" rx="2" fill="none" stroke="#fff" strokeOpacity=".75" strokeWidth="1.500" />
      {children}
    </svg>
  )
}

const serif = "font-['Liberation_Serif',serif] font-bold"
const GREENS = ['#a9e37a', '#c8f08a', '#8fd060', '#d7f59a', '#2f9a22', '#8fd92c', '#3aa02a', '#8fd92c', '#45e030', '#12700f', '#8be636', '#45d07a', '#17a022', '#0a4806', '#5cc03a', '#55f5c0']

const GEOMETRY: ReactNode[] = [
  <Hex><path d="M18 15L29 27M29 15L18 27" strokeWidth="4.500" /></Hex>,
  <Hex><path d="M15 30L28 17" strokeWidth="5.500" /><path d="M20 12L37 10L34 27Z" fill="#fff" stroke="none" /></Hex>,
  <Hex><circle cx="24" cy="21" r="12" strokeWidth="3.200" /></Hex>,
  <Hex><path d="M12 12Q29 16 32 33" strokeWidth="4" /><path d="M18 34H37M10 18L17 8" stroke="#999" strokeWidth="1.500" /></Hex>,
  <Hex><path d="M37 8C42 16 26 34 15 34C4 32 14 12 28 10" strokeWidth="2" /><ellipse cx="24" cy="20" rx="9" ry="5" transform="rotate(-40 24 20)" strokeWidth="2" /><ellipse cx="24" cy="20" rx="4" ry="2" transform="rotate(-40 24 20)" strokeWidth="1.500" /></Hex>,
  <Hex><path d="M16 30L33 13" strokeWidth="3" /><rect x="12" y="27" width="6" height="6" fill="#111" strokeWidth="2" /><rect x="30" y="10" width="6" height="6" fill="#111" strokeWidth="2" /></Hex>,
  <Hex><path d="M15 15L33 7L42 20L11 32Z" fill="#888" strokeWidth="3" /><path d="M19 19L33 15M26 12L29 25" stroke="#222" strokeWidth="1.500" /></Hex>,
  <Hex><path d="M24 10L34 20L24 32L14 20Z" strokeWidth="3" /><path d="M12 7L36 34M36 7L12 34" stroke="#999" strokeWidth="1.200" /></Hex>,
  <Hex><path d="M12 12L24 7L35 12V29L20 35L12 29Z" fill="#aaa" strokeWidth="1.800" /><path d="M12 12L21 16L35 12M21 16V34" strokeWidth="1.500" /></Hex>,
  <Hex><path d="M10 26L21 8Q30 3 38 16L28 33Q20 38 13 34Z" fill="url(#white)" strokeWidth="1.800" /><ellipse cx="30" cy="13" rx="8.500" ry="5" transform="rotate(42 30 13)" fill="#555" strokeWidth="1.500" /></Hex>,
  <Hex><g strokeWidth="1.600"><rect x="18" y="15" width="12" height="12" /><rect x="12.500" y="9.500" width="23" height="23" rx="4" /><path d="M24 6V36M9 21H39M13 10L35 32M35 10L13 32" /></g></Hex>,
  <Hex><path d="M20 7L33 6V36L10 30Q17 20 20 7Z" fill="#bbb" strokeWidth="1.500" /><path d="M15 22L33 21M27 7V34" stroke="#333" strokeWidth="1.500" /></Hex>,
]

const PRIMITIVE: ReactNode[] = [
  <Hex><circle cx="24" cy="21" r="11" strokeWidth="2.200" fill="#111" /><path d="M14 25A11 11 0 0 1 32 13Q16 16 19 30A11 11 0 0 1 14 25Z" fill="#f4f4f4" stroke="none" /><path d="M32 13Q34 24 18 30Q26 34 32 27" fill="#f4f4f4" stroke="none" opacity=".55" /></Hex>,
  <Hex><text x="24" y="32" textAnchor="middle" fill="#f4f4f4" stroke="none" fontSize="31" className={serif}>7</text></Hex>,
  <Hex><text x="9" y="31.500" fill="#f4f4f4" stroke="none" fontSize="31" className={serif} textLength="30" lengthAdjust="spacingAndGlyphs">0.1</text></Hex>,
  <Hex><text x="24" y="32" textAnchor="middle" fill="#f4f4f4" stroke="none" fontSize="35" className={serif}>A</text></Hex>,
]

const INPUT: ReactNode[] = [
  <Plate><path d="M21 12H27V21H31L24 30L17 21H21Z" fill="#000" /><path d="M6 36H42V38H6Z" fill="#111" /><path d="M9 38V43M14 38V43M19 38V43M24 38V43M29 38V43M34 38V43M39 38V43" stroke="#111" strokeWidth="2" /></Plate>,
  <Plate fill="url(#gold)"><path d="M7 36Q9 28 12 30Q12 38 15 36L22 23Q22 34 24 35L29 16Q27 28 31 28Q36 26 38 13Q38 22 34 29" fill="none" stroke="#b5671a" strokeWidth="4" strokeLinecap="round" strokeLinejoin="round" /></Plate>,
  <Plate><rect x="14" y="6" width="20" height="36" fill="#111" /><rect x="17" y="8" width="14" height="16" fill="url(#white)" /></Plate>,
  <svg className="size-12" viewBox="0 0 48 48"><circle cx="24" cy="24" r="22" fill="none" stroke="#3c3c3c" strokeWidth="2" /><circle cx="24" cy="24" r="19" fill="none" stroke="#9c9c9c" strokeWidth="4" /><circle cx="24" cy="24" r="15.500" fill="url(#hex)" stroke="#111" strokeWidth="2" /><path d="M36 15L46 24L36 33Z" fill="#222" /></svg>,
  <Plate fill="url(#plateDark)"><path d="M16 3L11 13H28M30 4L24 19" fill="none" stroke="#666" strokeWidth="4" /><path d="M31 25H19L16 33Q26 34 25 40Q23 44 14 43" fill="none" stroke="#1c1c1c" strokeWidth="4.500" /></Plate>,
  <Plate fill="#9c9c9c"><g fill="url(#white)" stroke="#222" strokeWidth="2"><rect x="6" y="8" width="36" height="8" /><rect x="6" y="20" width="36" height="8" /><rect x="6" y="32" width="36" height="8" /></g></Plate>,
  <Plate fill="url(#pink)"><rect x="3" y="3" width="42" height="26" fill="url(#shade)" /><path d="M3 31H45" stroke="#7a0a44" strokeWidth="2" /><circle cx="5" cy="31" r="3" fill="#fff" stroke="#000" strokeWidth="2" /><circle cx="33" cy="31" r="3.500" fill="#fff" stroke="#000" strokeWidth="2" /></Plate>,
  <Plate fill="#3fae2d">{GREENS.map((c, i) => <rect key={i} x={3 + (i % 4) * 10.5} y={3 + Math.floor(i / 4) * 10.5} width="10.500" height="10.500" fill={c} />)}</Plate>,
]

const UTIL: ReactNode[] = [
  <svg className="size-12" viewBox="0 0 48 48"><path d="M14 28Q24 18 30 8Q32 18 34 34" fill="none" stroke="#4a1010" strokeWidth="2.500" /><path d="M30 4Q14 2 10 18Q26 20 30 4Z" fill="url(#green)" /><circle cx="13" cy="32" r="9" fill="url(#red)" /><circle cx="34" cy="37" r="9" fill="url(#red)" /></svg>,
  <Plate fill="url(#plateSoft)"><path d="M24 43V28M24 32L14 24L8 23M14 24L10 14M24 28L18 18L12 10M18 18L20 8M24 28L27 16L24 7M27 16L33 8M24 32L33 22L40 22M33 22L38 12M29 27L36 29M20 29L10 30" stroke="#0a0a0a" strokeWidth="2.200" fill="none" /><path d="M21.500 43L23 28H25L27 43Z" fill="#0a0a0a" /><g fill="none" stroke="#151515" strokeWidth="3" strokeDasharray="2 2.500"><path d="M8 24Q6 12 20 7Q34 5 40 14Q43 24 38 28" /><path d="M12 22Q12 13 22 12Q34 11 36 20" /><path d="M16 22Q22 15 32 20" /></g><path d="M2 41H46V46H2Z" fill="#000" /></Plate>,
  <svg className="size-12" viewBox="0 0 48 48"><path d="M5 17H22V9L44 24L22 39V31H5Z" fill="url(#arrowDark)" stroke="#111" strokeWidth="2" /></svg>,
  <svg className="size-12" viewBox="0 0 48 48"><path d="M5 17H22V9L44 24L22 39V31H5Z" fill="url(#silver)" stroke="#686868" strokeWidth="2" /></svg>,
  <svg className="size-12" viewBox="0 0 48 48"><ellipse cx="18" cy="20" rx="12" ry="16" transform="rotate(38 18 20)" fill="url(#silver)" stroke="#777" strokeWidth="1.500" /><ellipse cx="18" cy="22" rx="3" ry="4" fill="#333" /><ellipse cx="31" cy="31" rx="11" ry="14" transform="rotate(38 31 31)" fill="url(#rose)" stroke="#8a1a4c" strokeWidth="1.500" /><ellipse cx="27" cy="32" rx="3" ry="4" fill="#7a0a3c" /></svg>,
  <svg className="size-12" viewBox="0 0 48 48"><path d="M19 4H26V18L37 40Q34 44 22 44Q10 44 8 40L19 18Z" fill="#eddfe6" stroke="#5e1a3c" strokeWidth="2" /><path d="M16 24H29L36 39Q32 43 22 43Q12 43 9 39Z" fill="url(#rose)" /></svg>,
]

function Column({ items }: { items: ReactNode[] }) {
  return (
    <div className="grid w-14 auto-rows-[56px] place-items-center">
      {items.map((it, i) => <div key={i} className="flex size-12 items-center justify-center">{it}</div>)}
    </div>
  )
}

function Rule() {
  return <div className="flex h-28 w-5 justify-center"><div className="w-0.5 bg-gradient-to-b from-transparent via-[#c8c8c8] to-transparent" /></div>
}

function Panel({ title, titleW, titlePad, width, icons, breaks }: { title: string; titleW: number; titlePad: string; width: string; icons: ReactNode[]; breaks: number[] }) {
  const columns: ReactNode[] = []
  for (let i = 0; i < icons.length; i += 2) {
    columns.push(<Column key={i} items={icons.slice(i, i + 2)} />)
    if (breaks.includes(i / 2)) columns.push(<Rule key={`r${i}`} />)
  }
  return (
    <div className={`${width} flex h-[146px] shrink-0 flex-col overflow-hidden rounded-lg border-2 border-[#b8b8b8] bg-[#828282] ring-1 ring-inset ring-[#4e4e4e]`}>
      <div className="flex h-[115px] shrink-0 pt-px pl-px">{columns}</div>
      <div className={`${ARIAL} ${titlePad} mx-px flex h-[25px] items-center justify-between border-b border-[#4e4e4e] bg-[#6c6c6c] pb-px pr-[3px] text-[20px] text-[#303030]`}>
        <Label w={titleW}>{title}</Label>
        <svg className="mt-1 h-[13px] w-3" viewBox="0 0 14 15" fill="#b8b8b8"><path d="M5.500 0H8.500V6H14L7 15L0 6H5.500Z" /></svg>
      </div>
    </div>
  )
}

const TABS: [string, number, string][] = [
  ['Math', 52, 'ml-[12px]'], ['Set', 35, 'ml-[24px]'], ['Vec', 40, 'ml-[25px]'], ['Crv', 36, 'ml-[24px]'], ['Srf', 30, 'ml-[24px]'],
  ['Msh', 43, 'ml-[24px]'], ['Int', 27, 'ml-[24px]'], ['Trns', 46, 'ml-[24px]'], ['Dis', 34, 'ml-[24px]'],
  ['Squid (ShapeDiver edition)', 276, 'ml-[24px]'], ['ShapeDiver', 122, 'ml-[24px]'], ['Wb', 35, 'ml-[24px]'],
  ['Bowerbird', 104, 'ml-[24px]'], ['Kangaroo2', 114, 'ml-[25px]'], ['W', 23, 'ml-[29px]'],
]

function Ribbon() {
  return (
    <div className="h-[198px] shrink-0 bg-[#616161]">
      <div className={`${ARIAL} flex h-[45px] text-[22px] text-[#b4b4b4]`}>
        <div className="h-[46px] w-[68px] shrink-0 rounded-t-[10px] border border-b-0 border-[#4a4a4a] bg-gradient-to-b from-[#8c8c8c] to-[#808080] pl-[12px] pt-[7px] text-white"><Label w={42}>Prm</Label></div>
        <div className="flex h-[45px] grow rounded-bl-lg border-b-2 border-[#505050] pt-[13px]">
          {TABS.map(([t, w, m]) => <Label key={t} w={w} className={m}>{t}</Label>)}
        </div>
      </div>
      <div className="mr-[3px] flex h-[151px] gap-[9px] rounded-r-[10px] rounded-bl-[10px] bg-gradient-to-b from-[#808080] to-[#878787] pl-[6px] pt-[5px]">
        <Panel title="Geometry" titleW={88} titlePad="pl-[135px]" width="w-[384px]" icons={GEOMETRY} breaks={[0, 3]} />
        <Panel title="Primitive" titleW={76} titlePad="pl-[8px]" width="w-[119px]" icons={PRIMITIVE} breaks={[]} />
        <Panel title="Input" titleW={45} titlePad="pl-[99px]" width="w-[271px]" icons={INPUT} breaks={[0, 2]} />
        <Panel title="Util" titleW={28} titlePad="pl-[79px]" width="w-[215px]" icons={UTIL} breaks={[0, 1]} />
      </div>
    </div>
  )
}

/* ---------- Canvas toolbar ---------- */

function Btn({ children, className = '', lit = false }: { children: ReactNode; className?: string; lit?: boolean }) {
  return (
    <div className={`${className} ${lit ? 'bg-[#999]' : 'bg-[#5f5f5f]'} flex h-[38px] w-16 shrink-0 items-center justify-center rounded-md border-t border-[#767676]`}>
      <svg className="size-[30px]" viewBox="0 0 32 32">{children}</svg>
    </div>
  )
}

function CanvasToolbar() {
  return (
    <div className="flex h-20 shrink-0 items-center bg-[#2d2d2d] pb-0.5 pl-[6px]">
      <Btn><path d="M7 3H15L19 7H21V20H7Z" fill="#f4f4f4" /><path d="M4 16L10 14L14 10H28V30H4Z" fill="url(#lime)" stroke="#3c7d17" /></Btn>
      <Btn className="ml-4"><path d="M2 2H30V30H4L2 28Z" fill="#2472e8" stroke="#0c3a9c" strokeWidth="1.500" /><rect x="7" y="2" width="18" height="13" fill="#eee" /><path d="M9 6H23M9 10H23" stroke="#aaa" strokeWidth="1.500" /><rect x="9" y="19" width="15" height="11" fill="#b8c8ea" /><rect x="11" y="21" width="5" height="9" fill="#1d4ca8" /></Btn>
      <span className="ml-[14px] h-8 w-0.5 bg-[#484848]" />
      <div className="ml-[10px] flex h-[38px] w-[60px] items-center border-b border-[#777] bg-[#383838] pl-[5px]"><Label w={47} className={`${INTER} text-[22px] text-[#e6e6e6]`}>40%</Label></div>
      <div className="flex h-[38px] w-[34px] items-center justify-center rounded-r-md bg-[#5f5f5f]"><svg className="h-2.5 w-4" viewBox="0 0 16 10" fill="none" stroke="#eee" strokeWidth="2.500"><path d="M1 1L8 8L15 1" /></svg></div>
      <Btn className="ml-[18px]"><path d="M3 11V3H13M19 3H29V11M29 21V29H19M13 29H3V21" fill="none" stroke="#1c1c1c" strokeWidth="5.500" /><path d="M12 12L20 20M20 12L12 20" stroke="#1c1c1c" strokeWidth="3" /></Btn>
      <Btn className="ml-[34px]"><path d="M2 17Q16 2 30 17Q16 30 2 17Z" fill="#d9e4e8" stroke="#4f6068" /><circle cx="16" cy="16.500" r="8" fill="#4fb4dd" stroke="#1b6a90" /><circle cx="16" cy="16.500" r="4" fill="#0c1c28" /><circle cx="14" cy="14" r="1.800" fill="#fff" /></Btn>
      <Btn className="ml-8"><path d="M30 3Q18 8 13 18L19 26Q31 20 30 3Z" fill="url(#red)" /><path d="M13 18L19 26Q15 28 12 26Z" fill="#e8c24a" /><path d="M3 17Q7 9 10 12Q8 20 4 25Q6 31 14 27" fill="none" stroke="#3c0d0a" strokeWidth="2.500" /></Btn>
      <Btn className="ml-[410px]"><path d="M7 10L12 3L20 2L26 9L22 17Q14 22 7 15Z" fill="url(#silver)" /><path d="M5 20Q16 13 27 20Q16 30 5 20Z" fill="#1b1b1b" /><path d="M5 22Q16 31 27 22Q24 31 16 31Q8 31 5 22Z" fill="#bbb" /></Btn>
      <Btn className="ml-[14px]"><path d="M2 19Q3 12 12 4Q20 0 28 7Q32 12 27 20L19 29Q10 33 4 26Z" fill="#555" stroke="#333" strokeWidth="2.500" /><ellipse cx="11" cy="19" rx="3.500" ry="7" transform="rotate(35 11 19)" fill="none" stroke="#333" strokeWidth="2" /><ellipse cx="20" cy="12" rx="3.500" ry="7" transform="rotate(35 20 12)" fill="none" stroke="#333" strokeWidth="2" /></Btn>
      <Btn className="ml-[14px]" lit><path d="M2 19L13 4Q19 0 26 5Q32 10 30 14L19 28Q12 32 6 28Q0 24 2 19Z" fill="url(#red)" stroke="#8c0a0d" strokeWidth="1.500" /><ellipse cx="23" cy="9" rx="8" ry="4.500" transform="rotate(42 23 9)" fill="#b01014" stroke="#7c080a" strokeWidth="1.500" /></Btn>
      <span className="ml-5 h-8 w-0.5 bg-[#484848]" />
      <Btn className="ml-5"><path d="M2 18L8 13L20 27Q15 32 8 29Q1 25 2 18Z" fill="url(#silver)" /><path d="M9 9L16 2Q25 1 30 9Q32 13 30 16L25 24Z" fill="url(#green)" /><ellipse cx="22" cy="9" rx="5.500" ry="3.500" transform="rotate(40 22 9)" fill="#1d5a0a" /><path d="M3 5L27 29" stroke="#222" strokeWidth="2" /></Btn>
      <Btn className="ml-3"><ellipse cx="18" cy="26" rx="12" ry="4" fill="#333" opacity=".5" /><ellipse cx="16" cy="15" rx="12.500" ry="13.500" fill="url(#silver)" /><path d="M16 1.500A12.500 13.500 0 0 0 16 28.500Z" fill="url(#orange)" /></Btn>
      <span className="ml-[10px] h-8 w-0.5 bg-[#484848]" />
      <Btn className="ml-[10px]"><circle cx="16" cy="18" r="11.500" fill="url(#sky)" /></Btn>
    </div>
  )
}

/* ---------- Node graph ---------- */

function wire(x0: number, y0: number, x1: number, y1: number) {
  const d = Math.max((x1 - x0) / 2, Math.abs(y1 - y0) * 0.75)
  return `M${x0} ${y0}C${x0 + d} ${y0} ${x1 - d} ${y1} ${x1} ${y1}`
}

const BLOCKS: [number, number][] = [[709, 84.5], [795, 84.5], [881, 84.5], [969, 84.5], [1057.5, 117], [1179.5, 117]]
const RESULTS: [number, number, boolean][] = [[1962.5, 735, true], [1962.5, 837.5, false], [1962.5, 940, true], [1962.5, 1043.5, true], [1962.5, 1148.5, true], [1961, 1286, true]]
const RANGE_INPUTS = [771.5, 857.5, 944, 1031.5, 1144.5, 1266]

function zigzag(x: number, y0: number, y1: number) {
  let d = `M${x} ${y0}`
  for (let y = y0, i = 0; y < y1; y += 2.4, i++) d += `L${x + (i % 2 ? 0 : 2.5)} ${y}`
  return d
}

function Graph() {
  return (
    <svg className="block h-[1236px] w-[1468px]" viewBox="1090 300 1468 1236">
      <defs>
        <linearGradient id="gBlock" x1="0" y1="0" x2="0" y2="1"><stop offset="0" stopColor="#9c9aab" /><stop offset="1" stopColor="#8b8998" /></linearGradient>
        <linearGradient id="gCore" x1="0" y1="0" x2="0" y2="1"><stop offset="0" stopColor="#404040" /><stop offset="1" stopColor="#303030" /></linearGradient>
        <linearGradient id="gLight" x1="0" y1="0" x2="0" y2="1"><stop offset="0" stopColor="#d8d8d8" /><stop offset="1" stopColor="#c6c6c6" /></linearGradient>
        <linearGradient id="gWarn" x1="0" y1="0" x2="0" y2="1"><stop offset="0" stopColor="#ff9c38" /><stop offset="1" stopColor="#fc8b26" /></linearGradient>
        <radialGradient id="dial"><stop offset="0" stopColor="#ededed" /><stop offset="1" stopColor="#868686" /></radialGradient>
      </defs>
      <g fill="none" stroke="#000" strokeOpacity=".6" strokeWidth="2.200">
        <path d="M1446.500 300C1478 614 1605 731 1866 731" />
        <path d="M1088 803C1350 812 1600 817.500 1866 817.500" />
        <path d="M1088 1139C1350 975 1560 903.500 1866 903.500" />
        <path d="M1088 1094.500C1340 1028 1590 991.500 1866 991.500" />
        <path d="M1088 1271C1340 1151 1590 1088 1866 1088" />
        <path d="M1088 1383C1340 1267 1590 1210 1866 1210" />
        {RANGE_INPUTS.map((y) => <path key={y} d={wire(1715, 971, 1866, y)} />)}
        <path d="M1913 837.500H1962" />
        <path d={wire(2003.5, 837.5, 2107.5, 988)} />
        <path d={wire(2148.7, 988, 2223, 879)} />
        <path d="M2149 988H2223M2176 931H2223" />
      </g>
      <g fill="none" stroke="#ff3c1e" strokeOpacity=".75" strokeWidth="2.400">
        {RESULTS.filter((r) => r[2]).map(([x, y]) => <path key={y} d={`M1913 ${y}H${x}${wire(x + 41, y, 2107.5, 988)}`} />)}
      </g>
      <g stroke="#222" strokeWidth="1.300">
        {BLOCKS.map(([y, h]) => (
          <g key={y}>
            <rect x="1866.500" y={y + 0.5} width="46.500" height={h - 1} rx="2" fill="url(#gBlock)" />
            <rect x="1878.800" y={y + 2} width="20" height={h - 4} rx="2.500" fill="url(#gCore)" stroke="#000" />
          </g>
        ))}
        {RESULTS.map(([x, y, warn]) => <rect key={y} x={x} y={y - 8} width="41" height="16" rx="2" fill={warn ? 'url(#gWarn)' : 'url(#gBlock)'} stroke={warn ? '#5a2a08' : '#222'} />)}
        <rect x="1612.500" y="962.500" width="102.500" height="17.500" rx="2" fill="url(#gLight)" />
        <rect x="2106" y="922.500" width="69.500" height="16.500" rx="2" fill="url(#gBlock)" />
        <path d="M2143.500 922.500H2173.500Q2175.500 922.500 2175.500 924.500V937Q2175.500 939 2173.500 939H2143.500Z" fill="#2d97d2" />
        <rect x="2107.500" y="980" width="41" height="16.500" rx="2" fill="url(#gBlock)" />
        <path d="M2259 852.500H2225Q2223.500 852.500 2223.500 854V957Q2223.500 958.500 2225 958.500H2259M2259 961.500H2225Q2223.500 961.500 2223.500 963V1014Q2223.500 1015.500 2225 1015.500H2259" fill="url(#gLight)" />
        <path d={zigzag(2257.5, 853, 958)} fill="none" />
        <path d={zigzag(2257.5, 962, 1015)} fill="none" />
        <rect x="2236.500" y="854" width="20" height="103" rx="2.500" fill="url(#gCore)" stroke="#000" />
        <rect x="2235.500" y="963" width="20" height="51" rx="2.500" fill="url(#gCore)" stroke="#000" />
      </g>
      <g>
        <rect x="1080" y="1480" width="22.500" height="54" rx="2" fill="#808080" stroke="#000" strokeWidth="2" />
        <rect x="1080" y="1481.500" width="20.500" height="18.500" fill="url(#gLight)" />
        <path d="M1100.500 1482V1533" stroke="#ccc" />
      </g>
      <g>
        <path d="M2481 1429.500Q2448 1446 2461 1487" fill="none" stroke="#000" strokeWidth="8" strokeLinecap="round" />
        <path d="M2439 1443L2453 1441L2458 1451L2447 1455Z" fill="#000" />
        <circle cx="2498.300" cy="1468.300" r="40" fill="#fff" stroke="#2b2b2b" strokeWidth="1.800" />
        <circle cx="2498.300" cy="1468.300" r="36" fill="url(#dial)" />
        <path d="M2507 1432L2516 1436L2508 1443.500ZM2467 1450L2474 1457.500L2462 1460ZM2522 1478L2534 1476L2530 1488ZM2477 1499L2488 1492L2489 1504Z" fill="#fff" />
      </g>
    </svg>
  )
}

function GraphWindow() {
  return (
    <div className="flex h-[1600px] grow flex-col bg-[#2d2d2d]">
      <Ribbon />
      <div className="h-5 shrink-0 bg-[#2d2d2d]" />
      <div className="flex shrink-0 flex-col border-2 border-[#666]">
        <CanvasToolbar />
        <div className="h-[1236px] bg-[#d4cfc8]"><Graph /></div>
      </div>
      <div className={`${INTER} flex h-[62px] items-center pb-0.5 pl-2 text-[24px] text-[#dedede]`}>
        <svg className="size-8 shrink-0" viewBox="0 0 32 32"><circle cx="16" cy="16" r="15" fill="url(#info)" stroke="#0c2380" strokeWidth="2" /><path d="M14 5H18L17.500 19H14.500Z" fill="#dff" stroke="#0f2c6c" strokeWidth="1.500" /><circle cx="16" cy="25" r="2.800" fill="#dff" stroke="#0f2c6c" strokeWidth="1.500" /></svg>
        <Label w={645} className="ml-1">Solution completed in ~145.1 seconds (140 seconds ago)</Label>
        <Label w={96} className="ml-[567px]">1.0.0007</Label>
      </div>
    </div>
  )
}

export default function App() {
  return (
    <div className="flex h-[1600px] w-[2560px] overflow-hidden bg-black">
      <Defs />
      <ModellerWindow />
      <div className="flex w-6 shrink-0 items-center justify-center"><span className="h-[129px] w-2 rounded-full bg-[#999]" /></div>
      <GraphWindow />
    </div>
  )
}
